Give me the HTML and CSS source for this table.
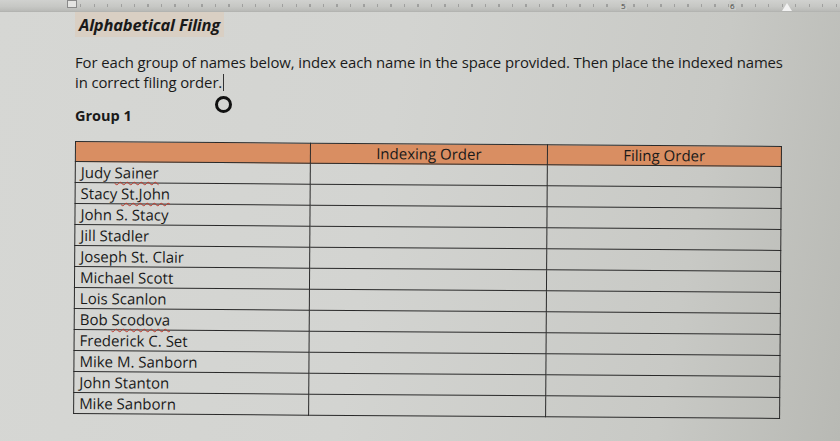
FILE: index.html
```html
<!DOCTYPE html>
<html>
<head>
<meta charset="utf-8">
<link rel="stylesheet" href="styles.css">
</head>
<body>
<div class="screen">
  <div class="ruler">
    <span class="indent-box"></span>
    <div class="ticks"></div>
    <span class="num n5">5</span>
    <span class="num n6">6</span>
    <span class="tab-marker"></span>
  </div>
  <div class="page">
    <h1 class="title"><span class="hl">Alphabetical Filing</span></h1>
    <p class="intro">For each group of names below, index each name in the space provided. Then place the indexed names in correct filing order.<span class="caret"></span></p>
    <span class="cursor-ring"></span>
    <h2 class="group">Group 1</h2>
    <table class="grid">
      <thead>
        <tr><th class="c1"></th><th class="c2">Indexing Order</th><th class="c3">Filing Order</th></tr>
      </thead>
      <tbody>
        <tr><td>Judy <u>Sainer</u></td><td></td><td></td></tr>
        <tr><td>Stacy <u>St.John</u></td><td></td><td></td></tr>
        <tr><td>John S. Stacy</td><td></td><td></td></tr>
        <tr><td>Jill Stadler</td><td></td><td></td></tr>
        <tr><td>Joseph St. Clair</td><td></td><td></td></tr>
        <tr><td>Michael Scott</td><td></td><td></td></tr>
        <tr><td>Lois Scanlon</td><td></td><td></td></tr>
        <tr><td>Bob <u>Scodova</u></td><td></td><td></td></tr>
        <tr><td>Frederick C. Set</td><td></td><td></td></tr>
        <tr><td>Mike M. Sanborn</td><td></td><td></td></tr>
        <tr><td>John Stanton</td><td></td><td></td></tr>
        <tr><td>Mike Sanborn</td><td></td><td></td></tr>
      </tbody>
    </table>
  </div>
</div>
</body>
</html>
```
FILE: styles.css
```css
html, body {
  margin: 0;
  padding: 0;
}
body {
  width: 840px;
  height: 441px;
  overflow: hidden;
  font-family: "Open Sans", "Liberation Sans", sans-serif;
  color: #1a1a1a;
}
.screen {
  width: 840px;
  height: 441px;
  background: linear-gradient(100deg, #d6d7d4 0%, #d3d4d1 45%, #c8c9c5 80%, #b8b9b4 100%);
  position: relative;
  overflow: hidden;
}
.ruler {
  height: 11px;
  background: linear-gradient(180deg, #d0d1cf 0%, #c6c7c4 60%, #b9bab7 100%);
  position: relative;
  border-bottom: 1px solid #b3b4b1;
}
.indent-box {
  position: absolute;
  left: 67px;
  top: 0;
  width: 8px;
  height: 6px;
  border: 1px solid #8a8a8a;
  background: #e4e4e2;
}
.ticks {
  position: absolute;
  left: 80px;
  right: 0;
  top: 4px;
  height: 3px;
  background-image: repeating-linear-gradient(90deg, #777 0 1px, transparent 1px 13.5px);
  opacity: 0.5;
}
.num {
  position: absolute;
  top: 1px;
  font-size: 8px;
  color: #444;
  background: #c8c9c6;
  padding: 0 1px;
  line-height: 9px;
}
.n5 { left: 620px; }
.n6 { left: 729px; }
.tab-marker {
  position: absolute;
  left: 782px;
  top: 3px;
  width: 0;
  height: 0;
  border-left: 5px solid transparent;
  border-right: 5px solid transparent;
  border-bottom: 8px solid #f2f2f2;
}
.page {
  position: relative;
  padding: 0 0 0 75px;
}
.title {
  margin: 0;
  padding-top: 2px;
  font-family: "Open Sans", sans-serif;
  font-size: 16.5px;
  font-weight: 700;
  font-style: italic;
  line-height: 22px;
  letter-spacing: -0.2px;
}
.hl {
  background: #d9cfc3;
  padding: 1px 4px 1px 4px;
}
.intro {
  margin: 16px 0 0 0;
  width: 710px;
  font-size: 14.9px;
  line-height: 20px;
  letter-spacing: -0.1px;
}
.caret {
  display: inline-block;
  width: 1px;
  height: 17px;
  background: #333;
  vertical-align: -3px;
  margin-left: 1px;
}
.cursor-ring {
  position: absolute;
  left: 215px;
  top: 84px;
  width: 11px;
  height: 11px;
  border: 3px solid #111;
  border-radius: 50%;
}
.group {
  margin: 14px 0 0 0;
  font-size: 14.5px;
  font-weight: 700;
  line-height: 20px;
}
.grid {
  margin-top: 15px;
  border-collapse: collapse;
  width: 707px;
  font-size: 15px;
  transform: rotate(0.4deg);
  transform-origin: 0 0;
}
.grid th, .grid td {
  border: 1.5px solid #2a2a2a;
  height: 20px;
  padding: 0 0 0 5px;
  line-height: 19px;
  text-align: left;
  white-space: nowrap;
}
.grid th {
  background: #d98e62;
  font-weight: 400;
  text-align: center;
  padding: 0;
  height: 19px;
}
.c1 { width: 233px; }
.c2 { width: 234px; }
.c3 { width: 232px; }
.grid u {
  text-decoration: underline wavy #c0392b;
  text-decoration-thickness: 1px;
  text-underline-offset: 3px;
}
```
